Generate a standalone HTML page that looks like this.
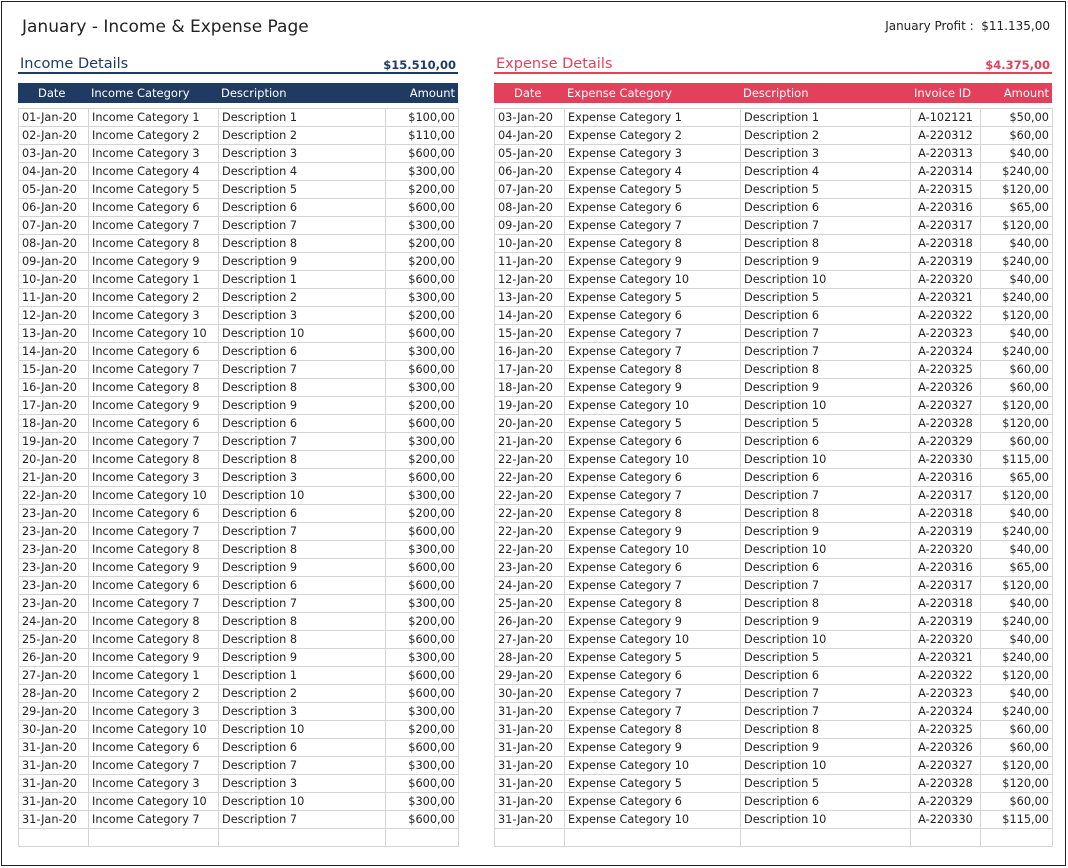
<!DOCTYPE html>
<html><head><meta charset="utf-8"><style>
body{margin:0;width:1068px;height:868px;background:#fff;font-family:"DejaVu Sans","Liberation Sans",sans-serif;color:#222;position:relative;overflow:hidden}
.frame{position:absolute;left:1px;top:1px;width:1063px;height:863px;border:1px solid #222}
.abs{position:absolute;white-space:nowrap}
table{border-collapse:collapse;position:absolute;font-size:11.3px;table-layout:fixed}
td{border:1px solid #d4d4d4;height:17px;padding:0 3px;white-space:nowrap;overflow:hidden;line-height:17px}
td.r{text-align:right}td.c{text-align:center}
.hd{position:absolute;height:20px;color:#fff;font-size:11.5px;line-height:20px}
.hd span{position:absolute;top:0}
</style></head><body>
<div class="frame"></div>
<div class="abs" style="left:22px;top:17px;font-size:17px">January - Income &amp; Expense Page</div>
<div class="abs" style="right:18px;top:19px;font-size:12px">January Profit :&nbsp; $11.135,00</div>

<div class="abs" style="left:20px;top:56px;font-size:14.5px;color:#1f3b63">Income Details</div>
<div class="abs" style="right:612px;top:58px;font-size:11.5px;font-weight:bold;color:#1f3b63">$15.510,00</div>
<div class="abs" style="left:18px;top:72px;width:440px;height:2px;background:#1f3b63"></div>
<div class="hd" style="left:18px;top:83px;width:440px;background:#1f3b63">
<span style="left:20px">Date</span><span style="left:73px">Income Category</span><span style="left:203px">Description</span><span style="right:3px">Amount</span></div>

<div class="abs" style="left:496px;top:56px;font-size:14.5px;color:#e2405b">Expense Details</div>
<div class="abs" style="right:18px;top:58px;font-size:11.5px;font-weight:bold;color:#e2405b">$4.375,00</div>
<div class="abs" style="left:494px;top:72px;width:558px;height:2px;background:#e2405b"></div>
<div class="hd" style="left:494px;top:83px;width:558px;background:#e2405b">
<span style="left:20px">Date</span><span style="left:73px">Expense Category</span><span style="left:249px">Description</span><span style="left:420px">Invoice ID</span><span style="right:3px">Amount</span></div>

<table style="left:18px;top:108px;width:440px">
<colgroup><col style="width:70px"><col style="width:130px"><col style="width:167px"><col style="width:73px"></colgroup>
<tr><td>01-Jan-20</td><td>Income Category 1</td><td>Description 1</td><td class="r">$100,00</td></tr>
<tr><td>02-Jan-20</td><td>Income Category 2</td><td>Description 2</td><td class="r">$110,00</td></tr>
<tr><td>03-Jan-20</td><td>Income Category 3</td><td>Description 3</td><td class="r">$600,00</td></tr>
<tr><td>04-Jan-20</td><td>Income Category 4</td><td>Description 4</td><td class="r">$300,00</td></tr>
<tr><td>05-Jan-20</td><td>Income Category 5</td><td>Description 5</td><td class="r">$200,00</td></tr>
<tr><td>06-Jan-20</td><td>Income Category 6</td><td>Description 6</td><td class="r">$600,00</td></tr>
<tr><td>07-Jan-20</td><td>Income Category 7</td><td>Description 7</td><td class="r">$300,00</td></tr>
<tr><td>08-Jan-20</td><td>Income Category 8</td><td>Description 8</td><td class="r">$200,00</td></tr>
<tr><td>09-Jan-20</td><td>Income Category 9</td><td>Description 9</td><td class="r">$200,00</td></tr>
<tr><td>10-Jan-20</td><td>Income Category 1</td><td>Description 1</td><td class="r">$600,00</td></tr>
<tr><td>11-Jan-20</td><td>Income Category 2</td><td>Description 2</td><td class="r">$300,00</td></tr>
<tr><td>12-Jan-20</td><td>Income Category 3</td><td>Description 3</td><td class="r">$200,00</td></tr>
<tr><td>13-Jan-20</td><td>Income Category 10</td><td>Description 10</td><td class="r">$600,00</td></tr>
<tr><td>14-Jan-20</td><td>Income Category 6</td><td>Description 6</td><td class="r">$300,00</td></tr>
<tr><td>15-Jan-20</td><td>Income Category 7</td><td>Description 7</td><td class="r">$600,00</td></tr>
<tr><td>16-Jan-20</td><td>Income Category 8</td><td>Description 8</td><td class="r">$300,00</td></tr>
<tr><td>17-Jan-20</td><td>Income Category 9</td><td>Description 9</td><td class="r">$200,00</td></tr>
<tr><td>18-Jan-20</td><td>Income Category 6</td><td>Description 6</td><td class="r">$600,00</td></tr>
<tr><td>19-Jan-20</td><td>Income Category 7</td><td>Description 7</td><td class="r">$300,00</td></tr>
<tr><td>20-Jan-20</td><td>Income Category 8</td><td>Description 8</td><td class="r">$200,00</td></tr>
<tr><td>21-Jan-20</td><td>Income Category 3</td><td>Description 3</td><td class="r">$600,00</td></tr>
<tr><td>22-Jan-20</td><td>Income Category 10</td><td>Description 10</td><td class="r">$300,00</td></tr>
<tr><td>23-Jan-20</td><td>Income Category 6</td><td>Description 6</td><td class="r">$200,00</td></tr>
<tr><td>23-Jan-20</td><td>Income Category 7</td><td>Description 7</td><td class="r">$600,00</td></tr>
<tr><td>23-Jan-20</td><td>Income Category 8</td><td>Description 8</td><td class="r">$300,00</td></tr>
<tr><td>23-Jan-20</td><td>Income Category 9</td><td>Description 9</td><td class="r">$600,00</td></tr>
<tr><td>23-Jan-20</td><td>Income Category 6</td><td>Description 6</td><td class="r">$600,00</td></tr>
<tr><td>23-Jan-20</td><td>Income Category 7</td><td>Description 7</td><td class="r">$300,00</td></tr>
<tr><td>24-Jan-20</td><td>Income Category 8</td><td>Description 8</td><td class="r">$200,00</td></tr>
<tr><td>25-Jan-20</td><td>Income Category 8</td><td>Description 8</td><td class="r">$600,00</td></tr>
<tr><td>26-Jan-20</td><td>Income Category 9</td><td>Description 9</td><td class="r">$300,00</td></tr>
<tr><td>27-Jan-20</td><td>Income Category 1</td><td>Description 1</td><td class="r">$600,00</td></tr>
<tr><td>28-Jan-20</td><td>Income Category 2</td><td>Description 2</td><td class="r">$600,00</td></tr>
<tr><td>29-Jan-20</td><td>Income Category 3</td><td>Description 3</td><td class="r">$300,00</td></tr>
<tr><td>30-Jan-20</td><td>Income Category 10</td><td>Description 10</td><td class="r">$200,00</td></tr>
<tr><td>31-Jan-20</td><td>Income Category 6</td><td>Description 6</td><td class="r">$600,00</td></tr>
<tr><td>31-Jan-20</td><td>Income Category 7</td><td>Description 7</td><td class="r">$300,00</td></tr>
<tr><td>31-Jan-20</td><td>Income Category 3</td><td>Description 3</td><td class="r">$600,00</td></tr>
<tr><td>31-Jan-20</td><td>Income Category 10</td><td>Description 10</td><td class="r">$300,00</td></tr>
<tr><td>31-Jan-20</td><td>Income Category 7</td><td>Description 7</td><td class="r">$600,00</td></tr>
<tr><td></td><td></td><td></td><td></td></tr>
</table>

<table style="left:494px;top:108px;width:558px">
<colgroup><col style="width:70px"><col style="width:176px"><col style="width:170px"><col style="width:70px"><col style="width:72px"></colgroup>
<tr><td>03-Jan-20</td><td>Expense Category 1</td><td>Description 1</td><td class="c">A-102121</td><td class="r">$50,00</td></tr>
<tr><td>04-Jan-20</td><td>Expense Category 2</td><td>Description 2</td><td class="c">A-220312</td><td class="r">$60,00</td></tr>
<tr><td>05-Jan-20</td><td>Expense Category 3</td><td>Description 3</td><td class="c">A-220313</td><td class="r">$40,00</td></tr>
<tr><td>06-Jan-20</td><td>Expense Category 4</td><td>Description 4</td><td class="c">A-220314</td><td class="r">$240,00</td></tr>
<tr><td>07-Jan-20</td><td>Expense Category 5</td><td>Description 5</td><td class="c">A-220315</td><td class="r">$120,00</td></tr>
<tr><td>08-Jan-20</td><td>Expense Category 6</td><td>Description 6</td><td class="c">A-220316</td><td class="r">$65,00</td></tr>
<tr><td>09-Jan-20</td><td>Expense Category 7</td><td>Description 7</td><td class="c">A-220317</td><td class="r">$120,00</td></tr>
<tr><td>10-Jan-20</td><td>Expense Category 8</td><td>Description 8</td><td class="c">A-220318</td><td class="r">$40,00</td></tr>
<tr><td>11-Jan-20</td><td>Expense Category 9</td><td>Description 9</td><td class="c">A-220319</td><td class="r">$240,00</td></tr>
<tr><td>12-Jan-20</td><td>Expense Category 10</td><td>Description 10</td><td class="c">A-220320</td><td class="r">$40,00</td></tr>
<tr><td>13-Jan-20</td><td>Expense Category 5</td><td>Description 5</td><td class="c">A-220321</td><td class="r">$240,00</td></tr>
<tr><td>14-Jan-20</td><td>Expense Category 6</td><td>Description 6</td><td class="c">A-220322</td><td class="r">$120,00</td></tr>
<tr><td>15-Jan-20</td><td>Expense Category 7</td><td>Description 7</td><td class="c">A-220323</td><td class="r">$40,00</td></tr>
<tr><td>16-Jan-20</td><td>Expense Category 7</td><td>Description 7</td><td class="c">A-220324</td><td class="r">$240,00</td></tr>
<tr><td>17-Jan-20</td><td>Expense Category 8</td><td>Description 8</td><td class="c">A-220325</td><td class="r">$60,00</td></tr>
<tr><td>18-Jan-20</td><td>Expense Category 9</td><td>Description 9</td><td class="c">A-220326</td><td class="r">$60,00</td></tr>
<tr><td>19-Jan-20</td><td>Expense Category 10</td><td>Description 10</td><td class="c">A-220327</td><td class="r">$120,00</td></tr>
<tr><td>20-Jan-20</td><td>Expense Category 5</td><td>Description 5</td><td class="c">A-220328</td><td class="r">$120,00</td></tr>
<tr><td>21-Jan-20</td><td>Expense Category 6</td><td>Description 6</td><td class="c">A-220329</td><td class="r">$60,00</td></tr>
<tr><td>22-Jan-20</td><td>Expense Category 10</td><td>Description 10</td><td class="c">A-220330</td><td class="r">$115,00</td></tr>
<tr><td>22-Jan-20</td><td>Expense Category 6</td><td>Description 6</td><td class="c">A-220316</td><td class="r">$65,00</td></tr>
<tr><td>22-Jan-20</td><td>Expense Category 7</td><td>Description 7</td><td class="c">A-220317</td><td class="r">$120,00</td></tr>
<tr><td>22-Jan-20</td><td>Expense Category 8</td><td>Description 8</td><td class="c">A-220318</td><td class="r">$40,00</td></tr>
<tr><td>22-Jan-20</td><td>Expense Category 9</td><td>Description 9</td><td class="c">A-220319</td><td class="r">$240,00</td></tr>
<tr><td>22-Jan-20</td><td>Expense Category 10</td><td>Description 10</td><td class="c">A-220320</td><td class="r">$40,00</td></tr>
<tr><td>23-Jan-20</td><td>Expense Category 6</td><td>Description 6</td><td class="c">A-220316</td><td class="r">$65,00</td></tr>
<tr><td>24-Jan-20</td><td>Expense Category 7</td><td>Description 7</td><td class="c">A-220317</td><td class="r">$120,00</td></tr>
<tr><td>25-Jan-20</td><td>Expense Category 8</td><td>Description 8</td><td class="c">A-220318</td><td class="r">$40,00</td></tr>
<tr><td>26-Jan-20</td><td>Expense Category 9</td><td>Description 9</td><td class="c">A-220319</td><td class="r">$240,00</td></tr>
<tr><td>27-Jan-20</td><td>Expense Category 10</td><td>Description 10</td><td class="c">A-220320</td><td class="r">$40,00</td></tr>
<tr><td>28-Jan-20</td><td>Expense Category 5</td><td>Description 5</td><td class="c">A-220321</td><td class="r">$240,00</td></tr>
<tr><td>29-Jan-20</td><td>Expense Category 6</td><td>Description 6</td><td class="c">A-220322</td><td class="r">$120,00</td></tr>
<tr><td>30-Jan-20</td><td>Expense Category 7</td><td>Description 7</td><td class="c">A-220323</td><td class="r">$40,00</td></tr>
<tr><td>31-Jan-20</td><td>Expense Category 7</td><td>Description 7</td><td class="c">A-220324</td><td class="r">$240,00</td></tr>
<tr><td>31-Jan-20</td><td>Expense Category 8</td><td>Description 8</td><td class="c">A-220325</td><td class="r">$60,00</td></tr>
<tr><td>31-Jan-20</td><td>Expense Category 9</td><td>Description 9</td><td class="c">A-220326</td><td class="r">$60,00</td></tr>
<tr><td>31-Jan-20</td><td>Expense Category 10</td><td>Description 10</td><td class="c">A-220327</td><td class="r">$120,00</td></tr>
<tr><td>31-Jan-20</td><td>Expense Category 5</td><td>Description 5</td><td class="c">A-220328</td><td class="r">$120,00</td></tr>
<tr><td>31-Jan-20</td><td>Expense Category 6</td><td>Description 6</td><td class="c">A-220329</td><td class="r">$60,00</td></tr>
<tr><td>31-Jan-20</td><td>Expense Category 10</td><td>Description 10</td><td class="c">A-220330</td><td class="r">$115,00</td></tr>
<tr><td></td><td></td><td></td><td></td><td></td></tr>
</table>
</body></html>
